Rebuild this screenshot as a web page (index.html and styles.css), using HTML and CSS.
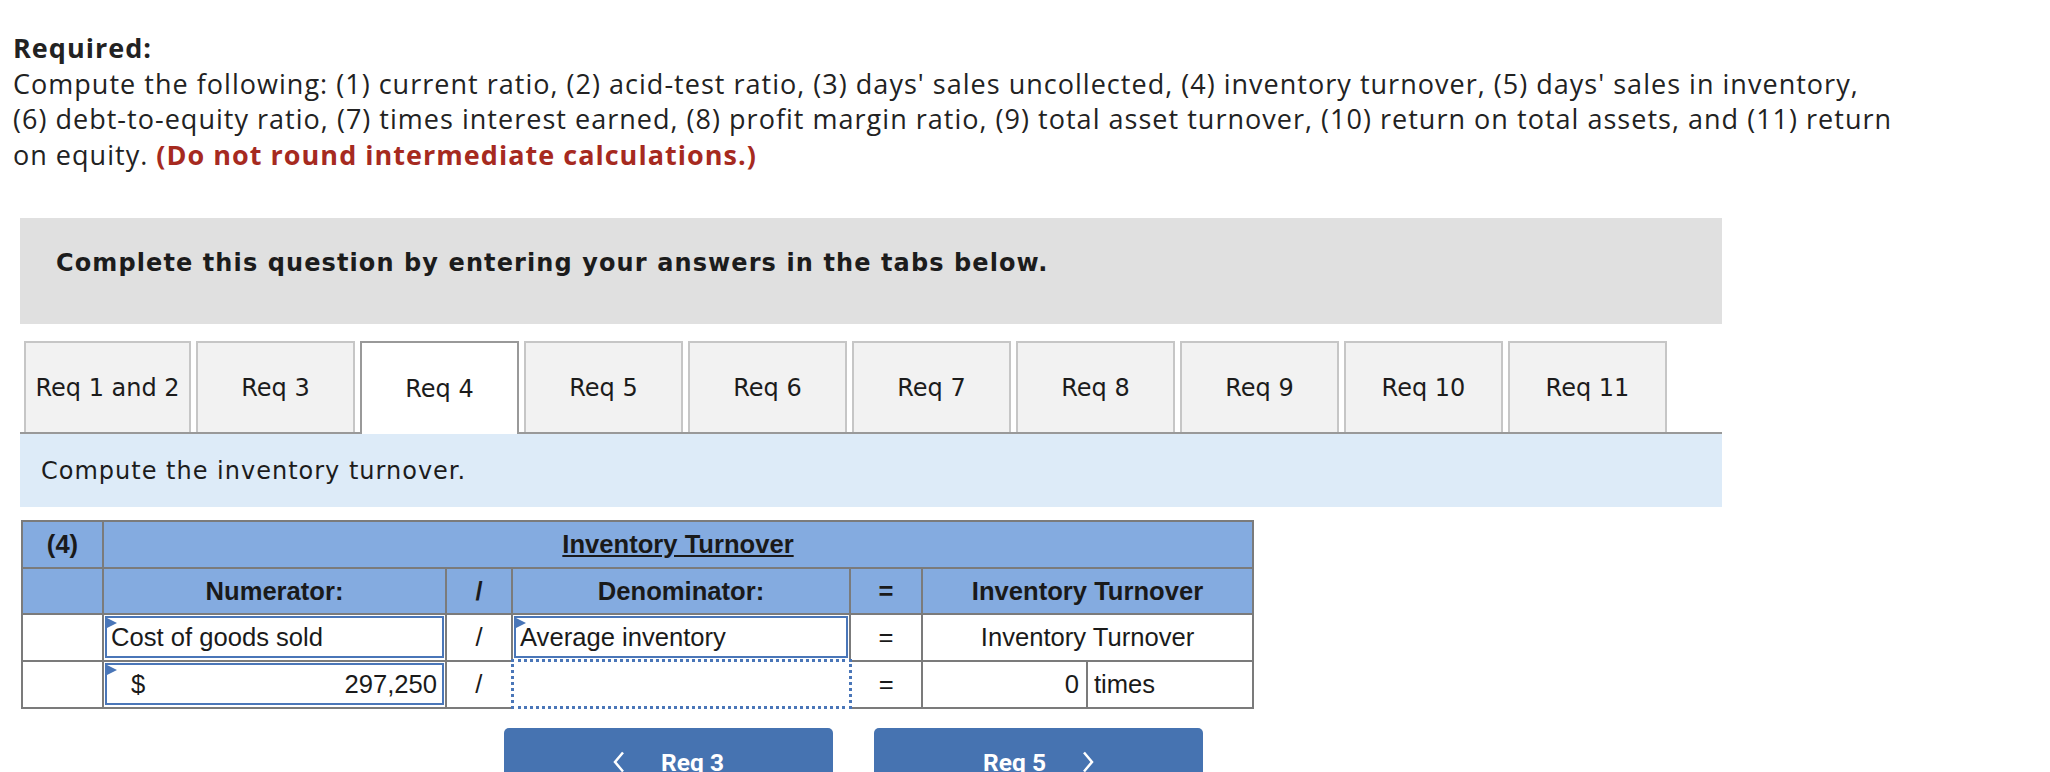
FILE: index.html
```html
<!DOCTYPE html>
<html lang="en">
<head>
    <meta charset="UTF-8">
    <meta name="viewport" content="width=device-width, initial-scale=1.0">
    <title>Inventory turnover</title>
    <link rel="stylesheet" href="styles.css">
</head>
<body>
    <div class="required">
        <b>Required:</b><br>
        Compute the following: (1) current ratio, (2) acid-test ratio, (3) days' sales uncollected, (4) inventory turnover, (5) days' sales in inventory,<br>
        (6) debt-to-equity ratio, (7) times interest earned, (8) profit margin ratio, (9) total asset turnover, (10) return on total assets, and (11) return<br>
        on equity. <span class="warn">(Do not round intermediate calculations.)</span>
    </div>

    <div class="prompt">Complete this question by entering your answers in the tabs below.</div>

    <div class="tabs">
        <div class="tab wide">Req 1 and 2</div>
        <div class="tab">Req 3</div>
        <div class="tab active">Req 4</div>
        <div class="tab">Req 5</div>
        <div class="tab">Req 6</div>
        <div class="tab">Req 7</div>
        <div class="tab">Req 8</div>
        <div class="tab">Req 9</div>
        <div class="tab">Req 10</div>
        <div class="tab">Req 11</div>
    </div>
    <div class="task">Compute the inventory turnover.</div>

    <table class="grid">
        <colgroup>
            <col style="width: 81px">
            <col style="width: 343px">
            <col style="width: 66px">
            <col style="width: 338px">
            <col style="width: 72px">
            <col style="width: 165px">
            <col style="width: 166px">
        </colgroup>
        <tr class="head title">
            <td>(4)</td>
            <td colspan="6"><u>Inventory Turnover</u></td>
        </tr>
        <tr class="head">
            <td></td>
            <td>Numerator:</td>
            <td>/</td>
            <td>Denominator:</td>
            <td>=</td>
            <td colspan="2">Inventory Turnover</td>
        </tr>
        <tr>
            <td></td>
            <td class="cell"><div class="field">Cost of goods sold</div></td>
            <td>/</td>
            <td class="cell"><div class="field">Average inventory</div></td>
            <td>=</td>
            <td colspan="2">Inventory Turnover</td>
        </tr>
        <tr>
            <td></td>
            <td class="cell"><div class="field money"><span>$</span><span>297,250</span></div></td>
            <td>/</td>
            <td class="focus"></td>
            <td>=</td>
            <td class="num">0</td>
            <td class="unit">times</td>
        </tr>
    </table>

    <div class="nav">
        <button class="btn">
            <svg width="12" height="22" viewBox="0 0 12 22"><polyline points="10,1.5 2,11 10,20.5" /></svg>
            Req 3
        </button>
        <button class="btn">
            Req 5
            <svg width="12" height="22" viewBox="0 0 12 22"><polyline points="2,1.5 10,11 2,20.5" /></svg>
        </button>
    </div>
</body>
</html>
```

FILE: styles.css
```css
body {
    margin: 0;
    font-family: "DejaVu Sans", Verdana, sans-serif;
    color: #1c1c1c;
}
.required {
    padding: 30px 13px 0;
    font-family: "Open Sans", "Liberation Sans", sans-serif;
    font-size: 27px;
    line-height: 35.5px;
    letter-spacing: 1.02px;
    color: #222;
    white-space: nowrap;
}
.warn {
    color: #a62a1f;
    font-weight: bold;
}
.prompt {
    margin: 46px 0 0 20px;
    width: 1702px;
    height: 106px;
    box-sizing: border-box;
    padding: 30px 36px;
    background: #e0e0e0;
    font-size: 24px;
    line-height: 30px;
    font-weight: bold;
    letter-spacing: 1.1px;
}

/* tabs */
.tabs {
    display: flex;
    align-items: flex-start;
    gap: 5px;
    margin: 17px 0 0 20px;
    width: 1702px;
    box-sizing: border-box;
    padding-left: 4px;
    border-bottom: 2px solid #999;
}
.tab {
    width: 159px;
    height: 91px;
    box-sizing: border-box;
    border: 2px solid #c6c6c6;
    border-bottom: 0;
    background: #f2f2f2;
    display: flex;
    align-items: center;
    justify-content: center;
    font-size: 24px;
}
.tab.wide {
    width: 167px;
}
.tab.active {
    height: 93px;
    margin-bottom: -2px;
    border-color: #999;
    background: #fff;
}
.task {
    margin-left: 20px;
    width: 1702px;
    height: 73px;
    box-sizing: border-box;
    padding-left: 21px;
    display: flex;
    align-items: center;
    background: #ddebf8;
    font-size: 24px;
    letter-spacing: 1px;
}

/* answer grid */
.grid {
    margin: 13px 0 0 21px;
    border-collapse: collapse;
    table-layout: fixed;
    width: 1231px;
    font-family: "Liberation Sans", Arial, sans-serif;
    font-size: 25.6px;
    color: #1a1a1a;
}
.grid td {
    border: 2px solid #7b7b7b;
    height: 44px;
    padding: 0;
    text-align: center;
}
.grid .head td {
    background: #84abe0;
    font-weight: bold;
}
.grid .title td {
    height: 45px;
}
.grid td.cell {
    padding: 0 1px;
}
.field {
    position: relative;
    height: 42px;
    box-sizing: border-box;
    border: 2px solid #4a76b8;
    padding: 0 5px 0 4px;
    display: flex;
    align-items: center;
    text-align: left;
    background: #fff;
}
.field::before {
    content: "";
    position: absolute;
    left: 0;
    top: 0;
    border-left: 10px solid #4a76b8;
    border-top: 5px solid transparent;
    border-bottom: 5px solid transparent;
}
.field.money {
    justify-content: space-between;
    padding-left: 24px;
}
.grid td.focus {
    border: 3px dotted #4a76b8;
}
.grid td.num {
    text-align: right;
    padding-right: 7px;
}
.grid td.unit {
    text-align: left;
    padding-left: 6px;
}

/* bottom navigation */
.nav {
    display: flex;
    gap: 41px;
    margin: 19px 0 0 504px;
}
.btn {
    width: 329px;
    height: 68px;
    border: 0;
    border-radius: 5px;
    background: #4673b1;
    color: #fff;
    font-family: Roboto, "Liberation Sans", sans-serif;
    font-size: 24.5px;
    font-weight: bold;
    display: flex;
    align-items: center;
    justify-content: center;
    gap: 36px;
}
.btn svg polyline {
    fill: none;
    stroke: #fff;
    stroke-width: 2.5;
}
```
